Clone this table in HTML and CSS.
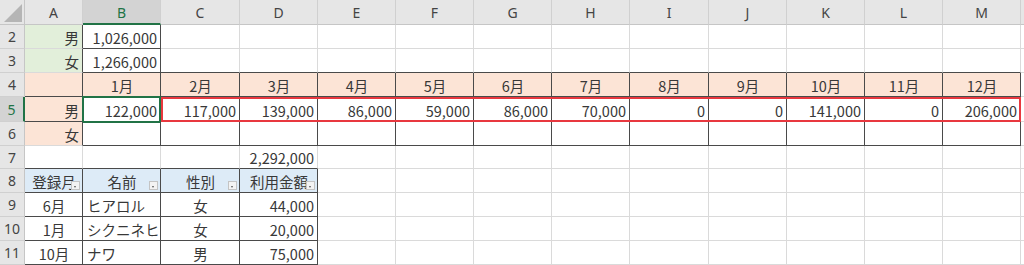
FILE: index.html
```html
<!DOCTYPE html>
<html lang="ja">
<head>
<meta charset="utf-8">
<title>Sheet</title>
<link rel="stylesheet" href="styles.css">
</head>
<body>
<div class="sheet">
  <!-- header row -->
  <div class="corner"><span class="tri"></span></div>
  <div class="hd">A</div><div class="hd sel">B</div><div class="hd">C</div><div class="hd">D</div><div class="hd">E</div><div class="hd">F</div><div class="hd">G</div><div class="hd">H</div><div class="hd">I</div><div class="hd">J</div><div class="hd">K</div><div class="hd">L</div><div class="hd">M</div><div class="hd end"></div>

  <!-- row 2 -->
  <div class="rh">2</div>
  <div class="c fg r dr">男</div>
  <div class="c r dr db">1,026,000</div>
  <div class="c"></div><div class="c"></div><div class="c"></div><div class="c"></div><div class="c"></div><div class="c"></div><div class="c"></div><div class="c"></div><div class="c"></div><div class="c"></div><div class="c"></div>
  <div class="c end"></div>

  <!-- row 3 -->
  <div class="rh">3</div>
  <div class="c fg r dr">女</div>
  <div class="c r dr db">1,266,000</div>
  <div class="c db"></div><div class="c db"></div><div class="c db"></div><div class="c db"></div><div class="c db"></div><div class="c db"></div><div class="c db"></div><div class="c db"></div><div class="c db"></div><div class="c db"></div><div class="c db"></div>
  <div class="c end"></div>

  <!-- row 4 -->
  <div class="rh">4</div>
  <div class="c fp dr db"></div>
  <div class="c fp m dr db">1月</div>
  <div class="c fp m dr db">2月</div>
  <div class="c fp m dr db">3月</div>
  <div class="c fp m dr db">4月</div>
  <div class="c fp m dr db">5月</div>
  <div class="c fp m dr db">6月</div>
  <div class="c fp m dr db">7月</div>
  <div class="c fp m dr db">8月</div>
  <div class="c fp m dr db">9月</div>
  <div class="c fp m dr db">10月</div>
  <div class="c fp m dr db">11月</div>
  <div class="c fp m dr db">12月</div>
  <div class="c end"></div>

  <!-- row 5 -->
  <div class="rh sel">5</div>
  <div class="c fp r dr db">男</div>
  <div class="c r dr db">122,000</div>
  <div class="c r dr db">117,000</div>
  <div class="c r dr db">139,000</div>
  <div class="c r dr db">86,000</div>
  <div class="c r dr db">59,000</div>
  <div class="c r dr db">86,000</div>
  <div class="c r dr db">70,000</div>
  <div class="c r dr db">0</div>
  <div class="c r dr db">0</div>
  <div class="c r dr db">141,000</div>
  <div class="c r dr db">0</div>
  <div class="c r dr db">206,000</div>
  <div class="c end"></div>
  <div class="active"></div>
  <div class="mark"></div>

  <!-- row 6 -->
  <div class="rh">6</div>
  <div class="c fp r dr">女</div>
  <div class="c dr db"></div><div class="c dr db"></div><div class="c dr db"></div><div class="c dr db"></div><div class="c dr db"></div><div class="c dr db"></div><div class="c dr db"></div><div class="c dr db"></div><div class="c dr db"></div><div class="c dr db"></div><div class="c dr db"></div><div class="c dr db"></div>
  <div class="c end"></div>

  <!-- row 7 -->
  <div class="rh">7</div>
  <div class="c db"></div><div class="c db"></div><div class="c db"></div>
  <div class="c r db">2,292,000</div>
  <div class="c"></div><div class="c"></div><div class="c"></div><div class="c"></div><div class="c"></div><div class="c"></div><div class="c"></div><div class="c"></div><div class="c"></div>
  <div class="c end"></div>

  <!-- row 8 -->
  <div class="rh">8</div>
  <div class="c fb m dr db th">登録月<span class="flt"></span></div>
  <div class="c fb m dr db th">名前<span class="flt"></span></div>
  <div class="c fb m dr db th">性別<span class="flt"></span></div>
  <div class="c fb m dr db th">利用金額<span class="flt"></span></div>
  <div class="c"></div><div class="c"></div><div class="c"></div><div class="c"></div><div class="c"></div><div class="c"></div><div class="c"></div><div class="c"></div><div class="c"></div>
  <div class="c end"></div>

  <!-- row 9 -->
  <div class="rh">9</div>
  <div class="c m dr db">6月</div>
  <div class="c dr db">ヒアロル</div>
  <div class="c m dr db">女</div>
  <div class="c r dr db">44,000</div>
  <div class="c"></div><div class="c"></div><div class="c"></div><div class="c"></div><div class="c"></div><div class="c"></div><div class="c"></div><div class="c"></div><div class="c"></div>
  <div class="c end"></div>

  <!-- row 10 -->
  <div class="rh">10</div>
  <div class="c m dr db">1月</div>
  <div class="c dr db">シクニネヒ</div>
  <div class="c m dr db">女</div>
  <div class="c r dr db">20,000</div>
  <div class="c"></div><div class="c"></div><div class="c"></div><div class="c"></div><div class="c"></div><div class="c"></div><div class="c"></div><div class="c"></div><div class="c"></div>
  <div class="c end"></div>

  <!-- row 11 -->
  <div class="rh">11</div>
  <div class="c m dr db">10月</div>
  <div class="c dr db">ナワ</div>
  <div class="c m dr db">男</div>
  <div class="c r dr db">75,000</div>
  <div class="c"></div><div class="c"></div><div class="c"></div><div class="c"></div><div class="c"></div><div class="c"></div><div class="c"></div><div class="c"></div><div class="c"></div>
  <div class="c end"></div>
</div>
</body>
</html>
```
FILE: styles.css
```css
html, body {
  margin: 0;
  padding: 0;
  background: #ffffff;
  overflow: hidden;
}

.sheet {
  position: relative;
  display: grid;
  grid-template-columns: 25px 58px 78px 79px 78px 78px 78px 78px 78px 79px 78px 78px 78px 78px 1fr;
  grid-template-rows: 25px 24px 24px 24px 25px 24px 23px 24px 24px 24px 24px;
  width: 1024px;
  height: 265px;
  font-family: "Noto Sans CJK JP", "Noto Sans", sans-serif;
  font-size: 14.5px;
  color: #383838;
}

/* top-left corner */
.corner {
  box-sizing: border-box;
  background: #e6e6e6;
  border-right: 1px solid #c6c6c6;
  border-bottom: 1px solid #c6c6c6;
  display: flex;
  align-items: flex-end;
  justify-content: flex-end;
  padding: 0 2px 2px 0;
}
.tri {
  width: 18px;
  height: 18px;
  background: #b5b5b5;
  clip-path: polygon(100% 0, 100% 100%, 0 100%);
}

/* column headers */
.hd {
  box-sizing: border-box;
  background: #e6e6e6;
  border-right: 1px solid #d0d0d0;
  border-bottom: 1px solid #c6c6c6;
  display: flex;
  align-items: center;
  justify-content: center;
  font-family: "Noto Sans", "Open Sans", sans-serif;
  font-size: 14px;
  color: #444444;
  padding-top: 1px;
}
.hd.sel {
  background: #d3d3d3;
  color: #217346;
  border-bottom: 2px solid #217346;
  padding-top: 2px;
}
.hd.end {
  border-right: none;
}

/* row headers */
.rh {
  box-sizing: border-box;
  background: #e6e6e6;
  border-right: 1px solid #c6c6c6;
  border-bottom: 1px solid #d0d0d0;
  display: flex;
  align-items: center;
  justify-content: center;
  font-family: "Noto Sans", "Open Sans", sans-serif;
  font-size: 14px;
  color: #444444;
}
.rh.sel {
  background: #d3d3d3;
  color: #217346;
  border-right: 2px solid #217346;
}

/* cells */
.c {
  box-sizing: border-box;
  position: relative;
  border-right: 1px solid #dadada;
  border-bottom: 1px solid #dadada;
  display: flex;
  align-items: flex-end;
  justify-content: flex-start;
  padding: 0 3px 2px 4px;
  line-height: 1.2;
  white-space: nowrap;
  overflow: visible;
}
.c.end { border-right: none; }
.c.r { justify-content: flex-end; }
.c.m { justify-content: center; }
.c.dr { border-right-color: #4a4a4a; }
.c.db { border-bottom-color: #4a4a4a; }
.c.fg { background: #e2efda; }
.c.fp { background: #fce4d6; }
.c.fb { background: #ddebf7; }

/* table header filter buttons */
.flt {
  position: absolute;
  right: 2px;
  bottom: 2px;
  width: 9px;
  height: 9px;
  box-sizing: border-box;
  background: #f3f3f3;
  border: 1px solid #c4c4c4;
}
.flt::after {
  content: "";
  position: absolute;
  left: 2px;
  bottom: 1px;
  border-left: 1.5px solid transparent;
  border-right: 1.5px solid transparent;
  border-top: 2px solid #555555;
}

/* selection overlays */
.active {
  position: absolute;
  grid-column: 3 / 4;
  grid-row: 5 / 6;
  top: -1px;
  left: -1px;
  right: 0;
  bottom: -1px;
  border: 2px solid #217346;
  pointer-events: none;
}
.mark {
  position: absolute;
  grid-column: 4 / 15;
  grid-row: 5 / 6;
  top: 0;
  left: 0;
  right: 0;
  bottom: 0;
  border: 2px solid #e8383f;
  pointer-events: none;
}
```
